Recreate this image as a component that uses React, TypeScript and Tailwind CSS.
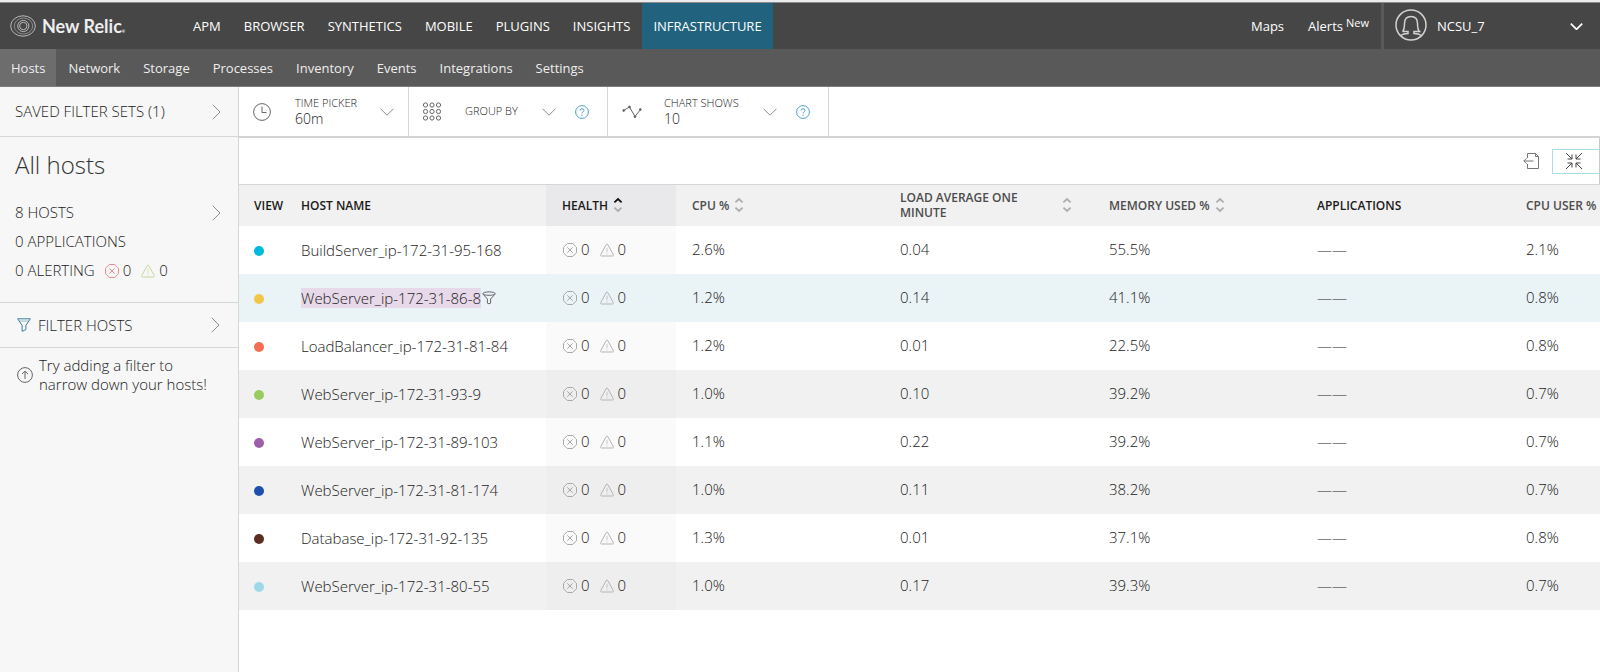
import type { ReactNode } from "react";

const products = ["APM", "BROWSER", "SYNTHETICS", "MOBILE", "PLUGINS", "INSIGHTS", "INFRASTRUCTURE"];
const sections = ["Hosts", "Network", "Storage", "Processes", "Inventory", "Events", "Integrations", "Settings"];

type Host = {
  name: string;
  dot: string;
  cpu: string;
  load: string;
  memory: string;
  cpuUser: string;
  selected?: boolean;
};

const hosts: Host[] = [
  { name: "BuildServer_ip-172-31-95-168", dot: "bg-[#00b9de]", cpu: "2.6%", load: "0.04", memory: "55.5%", cpuUser: "2.1%" },
  { name: "WebServer_ip-172-31-86-8", dot: "bg-[#f0c849]", cpu: "1.2%", load: "0.14", memory: "41.1%", cpuUser: "0.8%", selected: true },
  { name: "LoadBalancer_ip-172-31-81-84", dot: "bg-[#f36e53]", cpu: "1.2%", load: "0.01", memory: "22.5%", cpuUser: "0.8%" },
  { name: "WebServer_ip-172-31-93-9", dot: "bg-[#9acb62]", cpu: "1.0%", load: "0.10", memory: "39.2%", cpuUser: "0.7%" },
  { name: "WebServer_ip-172-31-89-103", dot: "bg-[#9c5fa8]", cpu: "1.1%", load: "0.22", memory: "39.2%", cpuUser: "0.7%" },
  { name: "WebServer_ip-172-31-81-174", dot: "bg-[#1d4fb0]", cpu: "1.0%", load: "0.11", memory: "38.2%", cpuUser: "0.7%" },
  { name: "Database_ip-172-31-92-135", dot: "bg-[#5a2d1e]", cpu: "1.3%", load: "0.01", memory: "37.1%", cpuUser: "0.8%" },
  { name: "WebServer_ip-172-31-80-55", dot: "bg-[#9ddae8]", cpu: "1.0%", load: "0.17", memory: "39.3%", cpuUser: "0.7%" },
];

function Chevron({ className }: { className: string }) {
  return (
    <svg viewBox="0 0 14 8" className={className} fill="none" stroke="currentColor">
      <path d="M0.5 0.7 7 7.2 13.5 0.7" />
    </svg>
  );
}

function ChevronRight() {
  return (
    <svg viewBox="0 0 9 16" className="h-4 w-[9px] shrink-0 text-[#8b8f8f]" fill="none" stroke="currentColor">
      <path d="M0.7 0.7 8 8 0.7 15.3" />
    </svg>
  );
}

function CriticalIcon({ className }: { className: string }) {
  return (
    <svg viewBox="0 0 14 14" className={`h-3.5 w-3.5 shrink-0 ${className}`} fill="none" stroke="currentColor">
      <path d="M4.3 0.5h5.4l3.8 3.8v5.4l-3.8 3.8H4.3L0.5 9.7V4.3z" />
      <path d="m4.3 4.3 5.4 5.4M9.7 4.3 4.3 9.7" />
    </svg>
  );
}

function WarningIcon({ className }: { className: string }) {
  return (
    <svg viewBox="0 0 14 14" className={`h-3.5 w-3.5 shrink-0 ${className}`} fill="none" stroke="currentColor">
      <path d="M6.4 1.3Q7 0.5 7.6 1.3L13.3 11.6Q13.6 12.9 12.5 13H1.5Q0.4 12.9 0.7 11.6z" />
      <path d="M7 4.8v4.4M7 10.4v1" strokeOpacity="0.7" />
    </svg>
  );
}

function HelpIcon() {
  return (
    <svg viewBox="0 0 14 14" className="h-3.5 w-3.5 text-[#4b9fd0]" fill="none" stroke="currentColor">
      <circle cx="7" cy="7" r="6.4" />
      <path d="M5 5.6Q5 3.7 7 3.7T9 5.5Q9 6.4 7.9 7 7 7.5 7 8.6M7 9.7v1.2" />
    </svg>
  );
}

function FunnelIcon({ className }: { className: string }) {
  return (
    <svg viewBox="0 0 14 14" className={`h-3.5 w-3.5 shrink-0 ${className}`} fill="none" stroke="currentColor">
      <path d="M0.6 0.8H13.4L8.9 7.3V11.6L5.1 13.3V7.3z" />
      <path d="M2.3 3.1H11.7" strokeOpacity="0.5" />
    </svg>
  );
}

function RoundFunnelIcon({ className }: { className: string }) {
  return (
    <svg viewBox="0 0 14 14" className={`h-3.5 w-3.5 shrink-0 ${className}`} fill="none" stroke="currentColor">
      <ellipse cx="7" cy="2.6" rx="6.2" ry="1.7" />
      <path d="M0.9 3 5.4 8V12.2Q7 13.4 8.6 12.2V8L13.1 3" />
    </svg>
  );
}

function SortArrows({ active }: { active?: boolean }) {
  return (
    <svg viewBox="0 0 10 16" className="h-4 w-2.5 shrink-0" fill="none" strokeWidth="1.8">
      <path d="M1.4 5.4 5 2 8.6 5.4" className={active ? "stroke-[#111111]" : "stroke-[#adadad]"} />
      <path d="M1.4 10.6 5 14 8.6 10.6" className="stroke-[#adadad]" />
    </svg>
  );
}

function HeaderCell({ children, active, spread }: { children: ReactNode; active?: boolean; spread?: boolean }) {
  return (
    <th
      scope="col"
      aria-sort={active ? "ascending" : "none"}
      className={`pl-4 font-semibold ${active ? "bg-[#e9e9eb] text-[#1a1a1a]" : "text-[#4c4c4c]"}`}
    >
      <button type="button" className={`flex w-full items-center gap-[5px] text-left ${spread ? "justify-between pr-[21px]" : ""}`}>
        <span className={spread ? "max-w-32" : "whitespace-nowrap"}>{children}</span>
        <SortArrows active={active} />
      </button>
    </th>
  );
}

function Header() {
  return (
    <header className="bg-[#464646] text-[13px] text-white">
      <div className="h-[3px] border-b border-[#8b8b8b] bg-[#ececec]" />
      <div className="flex h-[46px] items-stretch">
        <a href="#home" className="flex w-[182px] items-center gap-1.5 pl-2.5">
          <svg viewBox="0 0 26 22" className="h-[22px] w-[26px] text-[#b8b8b8]" fill="none" stroke="currentColor">
            <ellipse cx="13" cy="11" rx="12.3" ry="10.2" />
            <ellipse cx="13.5" cy="11" rx="9.2" ry="8" strokeOpacity="0.6" />
            <circle cx="13.3" cy="11" r="5.6" />
            <circle cx="13.3" cy="11" r="3.7" />
          </svg>
          <span className="font-[Lato,sans-serif] text-lg font-bold text-[#eeeeee]">
            New Relic<span className="text-[4px]">®</span>
          </span>
        </a>
        <nav aria-label="Products" className="flex gap-px">
          {products.map((item) => (
            <a
              key={item}
              href={`#${item.toLowerCase()}`}
              className={`flex items-center px-[11px] pt-0.5 ${item === "INFRASTRUCTURE" ? "bg-[#21637f]" : ""}`}
            >
              {item}
            </a>
          ))}
        </nav>
        <div className="ml-auto flex items-center gap-6 pt-0.5 pr-3">
          <a href="#maps">Maps</a>
          <a href="#alerts" className="flex items-center gap-[3px]">
            Alerts <span className="pb-2 text-[11px]">New</span>
          </a>
        </div>
        <button type="button" className="flex w-[219px] items-center border-l-3 border-[#595959] pr-[17px] pl-[11px]">
          <svg viewBox="0 0 32 32" className="mr-2.5 mb-0.5 h-8 w-8 text-[#d2d2d2]" fill="none" stroke="currentColor" strokeWidth="1.5">
            <circle cx="16" cy="16" r="15" />
            <path d="M7.5 22.5Q9.5 20.5 9.5 14.5C9.5 9.5 12.5 7.5 16 7.5S22.5 9.5 22.5 14.5Q22.5 20.5 24.5 22.5H19V24.5Q23.5 24.5 26.5 26.5M7.5 22.5H13V24.5Q8.5 24.5 5.5 26.5" />
          </svg>
          <span className="pt-0.5">NCSU_7</span>
          <Chevron className="ml-auto h-[7px] w-[13px] stroke-2" />
        </button>
      </div>
      <nav aria-label="Infrastructure" className="flex h-[38px] gap-px border-b border-[#7d7d7d] bg-[#595959] text-[#eeeeee]">
        {sections.map((item) => (
          <a
            key={item}
            href={`#${item.toLowerCase()}`}
            className={`flex items-center px-[11px] pt-0.5 ${item === "Hosts" ? "bg-[#6d6d6d]" : ""}`}
          >
            {item}
          </a>
        ))}
      </nav>
    </header>
  );
}

function Sidebar() {
  return (
    <aside className="w-[239px] shrink-0 border-r border-[#d5d7d7] bg-[#f7f7f7] font-light">
      <button type="button" className="flex h-[50px] w-full items-center justify-between border-b border-[#d5d7d7] pr-[17px] pl-[15px]">
        SAVED FILTER SETS (1)
        <ChevronRight />
      </button>
      <section className="border-b border-[#d5d7d7] pt-3 pr-[17px] pb-[17px] pl-[15px]">
        <h1 className="pb-[17px] text-2xl text-[#333333]">All hosts</h1>
        <button type="button" className="flex w-full items-center justify-between leading-[29px]">
          8 HOSTS
          <ChevronRight />
        </button>
        <p className="leading-[29px]">0 APPLICATIONS</p>
        <p className="flex items-center leading-[29px]">
          0 ALERTING
          <CriticalIcon className="mr-1 ml-2.5 text-[#e58a92]" />0
          <WarningIcon className="mr-1 ml-2.5 text-[#c3d7a0]" />0
        </p>
      </section>
      <button type="button" className="flex h-[45px] w-full items-center border-b border-[#d5d7d7] pr-[18px] pl-[17px]">
        <FunnelIcon className="mr-[7px] text-[#3d7f9c]" />
        <span className="mr-auto">FILTER HOSTS</span>
        <ChevronRight />
      </button>
      <div className="flex items-center gap-1.5 pt-2 pl-[17px] leading-[19px]">
        <svg viewBox="0 0 16 16" className="h-4 w-4 shrink-0 text-[#666666]" fill="none" stroke="currentColor">
          <circle cx="8" cy="8" r="7.4" />
          <path d="M8 12V4.5M5 7 8 4.2 11 7" />
        </svg>
        <p>
          Try adding a filter to
          <br />
          narrow down your hosts!
        </p>
      </div>
    </aside>
  );
}

function Toolbar() {
  return (
    <div className="flex h-[51px] border-b-2 border-[#d3d3d3] font-light">
      <button type="button" className="flex w-[170px] items-center border-r border-[#d5d7d7] px-3.5 text-left">
        <svg viewBox="0 0 18 18" className="mr-6 h-[18px] w-[18px] text-[#666666]" fill="none" stroke="currentColor">
          <circle cx="9" cy="9" r="8.4" />
          <path d="M9 3.5V9.5H13.5" />
        </svg>
        <span className="mr-auto pb-0.5 text-sm leading-4">
          <span className="block text-[11px] leading-4">TIME PICKER</span>
          60m
        </span>
        <Chevron className="h-2 w-3.5 text-[#8b8f8f]" />
      </button>
      <div className="flex w-[199px] items-center justify-between border-r border-[#d5d7d7] pr-[18px] pl-3.5">
        <button type="button" className="flex items-center text-[11px]">
          <svg viewBox="0 0 18 19" className="mr-6 h-[19px] w-[18px] text-[#666666]" fill="none" stroke="currentColor">
            {[3, 9.5, 16].map((cy) => [2.5, 9, 15.5].map((cx) => <circle key={`${cx}-${cy}`} cx={cx} cy={cy} r="2.1" />))}
          </svg>
          <span className="mr-6">GROUP BY</span>
          <Chevron className="h-2 w-3.5 text-[#8b8f8f]" />
        </button>
        <button type="button" aria-label="Help on group by">
          <HelpIcon />
        </button>
      </div>
      <div className="flex w-[221px] items-center justify-between border-r border-[#d5d7d7] pr-[18px] pl-3.5">
        <button type="button" className="flex items-center text-left">
          <svg viewBox="0 0 20 14" className="mr-[22px] h-3.5 w-5 text-[#666666]" fill="none" stroke="currentColor">
            <path d="M1.5 5.5 7.5 2 13 11.5 18.5 4.5" />
            <g fill="currentColor">
              <circle cx="1.7" cy="5.5" r="0.9" />
              <circle cx="7.5" cy="2" r="0.9" />
              <circle cx="13" cy="11.7" r="0.9" />
              <circle cx="18.3" cy="4.5" r="0.9" />
            </g>
          </svg>
          <span className="mr-6 pb-0.5 text-sm leading-4">
            <span className="block text-[11px] leading-4">CHART SHOWS</span>
            10
          </span>
          <Chevron className="h-2 w-3.5 text-[#8b8f8f]" />
        </button>
        <button type="button" aria-label="Help on chart shows">
          <HelpIcon />
        </button>
      </div>
    </div>
  );
}

function HostTable() {
  return (
    <table className="w-full table-fixed border-collapse text-left text-[15px] font-light">
      <colgroup>
        <col className="w-[46px]" />
        <col className="w-[261px]" />
        <col className="w-[130px]" />
        <col className="w-[208px]" />
        <col className="w-[209px]" />
        <col className="w-[208px]" />
        <col className="w-[209px]" />
        <col />
      </colgroup>
      <thead className="border-t border-[#d5d7d7] bg-[#f1f1f1] text-xs leading-[15px] text-[#1a1a1a]">
        <tr className="h-[41px]">
          <th scope="col" className="pl-[15px] font-semibold">VIEW</th>
          <th scope="col" className="pl-4 font-semibold">HOST NAME</th>
          <HeaderCell active>HEALTH</HeaderCell>
          <HeaderCell>CPU %</HeaderCell>
          <HeaderCell spread>LOAD AVERAGE ONE MINUTE</HeaderCell>
          <HeaderCell>MEMORY USED %</HeaderCell>
          <th scope="col" className="pl-4 font-semibold">APPLICATIONS</th>
          <th scope="col" className="pl-4 font-semibold whitespace-nowrap text-[#4c4c4c]">CPU USER %</th>
        </tr>
      </thead>
      <tbody>
        {hosts.map((host, index) => {
          const striped = index % 2 === 1;
          const row = host.selected ? "bg-[#eaf3f6]" : striped ? "bg-[#f1f1f1]" : "bg-white";
          const health = host.selected ? "" : striped ? "bg-[#eeeeee]" : "bg-[#fafafa]";
          return (
            <tr key={host.name} className={`h-12 ${row}`}>
              <td className="pl-[15px]">
                <span className={`mt-0.5 block h-2.5 w-2.5 rounded-full ${host.dot}`} />
              </td>
              <td className="pl-4">
                <a href={`#${host.name}`} className="flex items-center leading-5">
                  <span className={host.selected ? "bg-[#e8d9ea]" : ""}>{host.name}</span>
                  {host.selected && <RoundFunnelIcon className="ml-px text-[#666666]" />}
                </a>
              </td>
              <td className={`pl-[17px] ${health}`}>
                <span className="flex items-center">
                  <CriticalIcon className="mr-1 text-[#a8a8a8]" />0
                  <WarningIcon className="mr-1 ml-2.5 text-[#b4b4b4]" />0
                </span>
              </td>
              <td className="pl-4">{host.cpu}</td>
              <td className="pl-4">{host.load}</td>
              <td className="pl-4">{host.memory}</td>
              <td className="pl-4">——</td>
              <td className="pl-4">{host.cpuUser}</td>
            </tr>
          );
        })}
      </tbody>
    </table>
  );
}

export default function App() {
  return (
    <div className="flex min-h-screen flex-col bg-white font-['Open_Sans',sans-serif] text-[15px] text-[#1a1a1a]">
      <Header />
      <div className="flex grow">
        <Sidebar />
        <main className="min-w-0 grow">
          <Toolbar />
          <div className="flex h-[46px] items-center justify-end gap-3 border-r border-[#c8c8c8]">
            <button type="button" aria-label="Export">
              <svg viewBox="0 0 17 18" className="h-[18px] w-[17px] text-[#777777]" fill="none" stroke="currentColor">
                <path d="M4.5 6V1.5H12.5L15.5 4.5V16.5H4.5V12M12.5 1.5V4.5H15.5M0.8 9H10.5M3.5 6.3 0.8 9 3.5 11.7" />
              </svg>
            </button>
            <button type="button" aria-label="Collapse" className="flex h-[25px] w-[47px] items-center border border-r-0 border-[#abdeeb] pl-3">
              <svg viewBox="0 0 18 18" className="h-[18px] w-[18px] text-[#444444]" fill="none" stroke="currentColor">
                <path d="M1 1 7 7M7 2.5V7H2.5M17 1 11 7M11 2.5V7H15.5M1 17 7 11M7 15.5V11H2.5M17 17 11 11M11 15.5V11H15.5" />
              </svg>
            </button>
          </div>
          <HostTable />
        </main>
      </div>
    </div>
  );
}
